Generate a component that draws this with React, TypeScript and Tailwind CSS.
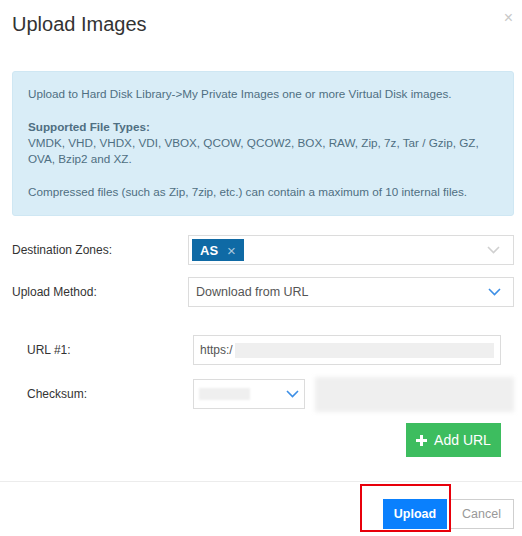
import React from "react";

// chevron used by the select boxes
const Chevron = ({ color }: { color: string }) => (
  <svg width="13" height="8" viewBox="0 0 13 8" fill="none">
    <polyline points="1,1 6.5,6.5 12,1" stroke={color} strokeWidth="1.6" />
  </svg>
);

const App: React.FC = () => {
  return (
    <div className="w-[522px] h-[536px] bg-white relative font-['Liberation_Sans',Arial,sans-serif] text-[#333] overflow-hidden">
      {/* header */}
      <div className="flex justify-between pl-3 pr-2 pt-[13px]">
        <h2 className="text-[20px] leading-[22px] text-[#333]">Upload Images</h2>
        <span className="text-[16px] leading-[16px] text-[#c8c8c8] mr-[1px] mt-[-3px]">×</span>
      </div>

      <div className="pl-3 pr-2">
        {/* info box */}
        <div className="mt-[36px] bg-[#d9edf7] border border-[#cfe7f3] rounded-[3px] pl-[15px] pr-3 pt-[14px] pb-[15px] text-[11.7px] leading-[16px] text-[#4f6f82]">
          <p className="mb-[17px]">Upload to Hard Disk Library-&gt;My Private Images one or more Virtual Disk images.</p>
          <p className="mb-[17px]">
            <span className="font-bold">Supported File Types:</span>
            <br />
            VMDK, VHD, VHDX, VDI, VBOX, QCOW, QCOW2, BOX, RAW, Zip, 7z, Tar / Gzip, GZ, OVA, Bzip2 and XZ.
          </p>
          <p>Compressed files (such as Zip, 7zip, etc.) can contain a maximum of 10 internal files.</p>
        </div>

        {/* destination zones */}
        <div className="flex items-center mt-[19px]">
          <label className="w-[176px] text-[12px]">Destination Zones:</label>
          <div className="flex-1 h-[30px] border border-[#dcdcdc] flex items-center pl-[3px] pr-[13px]">
            <span className="h-[22px] bg-[#0f6aa5] flex items-center pl-2 pr-2 gap-[9px] text-white">
              <span className="text-[13px] font-bold leading-none">AS</span>
              <span className="text-[15px] leading-none text-[#a8c8de]">×</span>
            </span>
            <span className="ml-auto"><Chevron color="#d0d0d0" /></span>
          </div>
        </div>

        {/* upload method */}
        <div className="flex items-center mt-3">
          <label className="w-[176px] text-[12px]">Upload Method:</label>
          <div className="flex-1 h-[30px] border border-[#dcdcdc] flex items-center pl-[7px] pr-[12px]">
            <span className="text-[12.5px] text-[#555]">Download from URL</span>
            <span className="ml-auto"><Chevron color="#3d8fe6" /></span>
          </div>
        </div>

        {/* url block */}
        <div className="pl-[15px] mt-[28px]">
          <div className="flex items-center">
            <label className="w-[166px] text-[12px]">URL #1:</label>
            <div className="w-[308px] h-[30px] border border-[#dcdcdc] flex items-center pl-[6px] pr-[6px]">
              <span className="text-[12px] text-[#555]">https:/</span>
              <div className="h-[15px] flex-1 bg-[#efefef] ml-[2px]" />
            </div>
          </div>

          <div className="flex items-center h-[30px] mt-[14px]">
            <label className="w-[166px] text-[12px]">Checksum:</label>
            <div className="w-[112px] h-[30px] border border-[#dcdcdc] flex items-center pl-[5px] pr-[5px]">
              <div className="w-[51px] h-[12px] bg-[#efefef] blur-[1px]" />
              <span className="ml-auto"><Chevron color="#3d8fe6" /></span>
            </div>
            <div className="ml-[10px] w-[199px] h-[35px] shrink-0 bg-[#efefef] blur-[2px]" />
          </div>

          <div className="flex justify-end pr-[13px] mt-[14px]">
            <button className="w-[95px] h-[34px] bg-[#3dbd5f] text-white text-[14px] flex items-center justify-center gap-[7px]">
              <svg width="11" height="11" viewBox="0 0 11 11">
                <path d="M4 0h3v4h4v3H7v4H4V7H0V4h4z" fill="#fff" />
              </svg>
              Add URL
            </button>
          </div>
        </div>
      </div>

      {/* footer */}
      <div className="mt-[24px] border-t border-[#ececec] pt-[17px] flex justify-end gap-[2px] pr-2">
        <span className="relative">
          <button className="w-[64px] h-[30px] bg-[#0a80fd] text-white text-[12.5px] font-bold">Upload</button>
          <span className="absolute left-[-23px] top-[-15px] right-[-4px] bottom-[-3px] border-2 border-[#e8000b] pointer-events-none" />
        </span>
        <button className="w-[65px] h-[30px] bg-white border border-[#cfcfcf] text-[#999] text-[12.5px]">Cancel</button>
      </div>
    </div>
  );
};

export default App;
